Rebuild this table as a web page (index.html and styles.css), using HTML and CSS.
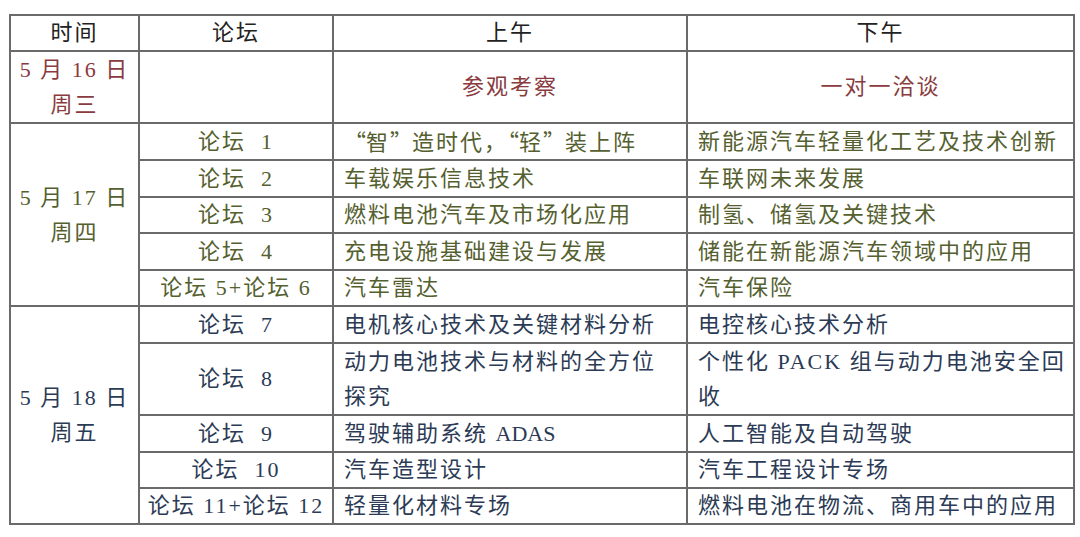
FILE: index.html
```html
<!DOCTYPE html>
<html lang="zh-CN">
<head>
<meta charset="utf-8">
<link rel="stylesheet" href="styles.css">
</head>
<body>
<table class="sched">
  <colgroup>
    <col class="c-time"><col class="c-forum"><col class="c-am"><col class="c-pm">
  </colgroup>
  <tr class="head h36">
    <td class="ctr">时间</td><td class="ctr">论坛</td><td class="ctr">上午</td><td class="ctr">下午</td>
  </tr>
  <tr class="red h72">
    <td class="ctr two">5 月 16 日<br>周三</td><td></td><td class="ctr">参观考察</td><td class="ctr">一对一洽谈</td>
  </tr>
  <tr class="olive h37">
    <td class="ctr two" rowspan="5">5 月 17 日<br>周四</td><td class="ctr">论坛&nbsp;&nbsp;1</td><td><span class="q">“</span>智<span class="q">”</span>造时代，<span class="q">“</span>轻<span class="q">”</span>装上阵</td><td class="pm">新能源汽车轻量化工艺及技术创新</td>
  </tr>
  <tr class="olive h37">
    <td class="ctr">论坛&nbsp;&nbsp;2</td><td>车载娱乐信息技术</td><td class="pm">车联网未来发展</td>
  </tr>
  <tr class="olive h36">
    <td class="ctr">论坛&nbsp;&nbsp;3</td><td>燃料电池汽车及市场化应用</td><td class="pm">制氢、储氢及关键技术</td>
  </tr>
  <tr class="olive h37">
    <td class="ctr">论坛&nbsp;&nbsp;4</td><td>充电设施基础建设与发展</td><td class="pm">储能在新能源汽车领域中的应用</td>
  </tr>
  <tr class="olive h36">
    <td class="ctr">论坛 5+论坛 6</td><td>汽车雷达</td><td class="pm">汽车保险</td>
  </tr>
  <tr class="navy h37">
    <td class="ctr two" rowspan="5">5 月 18 日<br>周五</td><td class="ctr">论坛&nbsp;&nbsp;7</td><td>电机核心技术及关键材料分析</td><td class="pm">电控核心技术分析</td>
  </tr>
  <tr class="navy h72">
    <td class="ctr">论坛&nbsp;&nbsp;8</td><td class="two">动力电池技术与材料的全方位探究</td><td class="two pm">个性化 PACK 组与动力电池安全回收</td>
  </tr>
  <tr class="navy h37">
    <td class="ctr">论坛&nbsp;&nbsp;9</td><td>驾驶辅助系统 <span class="lat">ADAS</span></td><td class="pm">人工智能及自动驾驶</td>
  </tr>
  <tr class="navy h36">
    <td class="ctr">论坛&nbsp;&nbsp;10</td><td>汽车造型设计</td><td class="pm">汽车工程设计专场</td>
  </tr>
  <tr class="navy h36">
    <td class="ctr">论坛 11+论坛 12</td><td>轻量化材料专场</td><td class="pm">燃料电池在物流、商用车中的应用</td>
  </tr>
</table>
</body>
</html>
```

FILE: styles.css
```css
html, body {
  margin: 0;
  padding: 0;
  background: #ffffff;
}
body {
  padding: 14px 0 0 9px;
}
.sched {
  border-collapse: collapse;
  table-layout: fixed;
  width: 1064px;
  font-family: "Liberation Serif", "Noto Sans CJK SC", serif;
  font-size: 22px;
  letter-spacing: 2px;
  line-height: 28px;
}
.c-time { width: 129px; }
.c-forum { width: 194px; }
.c-am { width: 354px; }
.c-pm { width: 387px; }
.sched td {
  border: 2px solid #6a6a6a;
  padding: 0 10px 0 10px;
  vertical-align: middle;
  text-align: left;
}
.sched td.pm {
  padding-right: 0;
}
.sched td.ctr {
  text-align: center;
  padding: 0 2px;
}
.sched td.two {
  line-height: 35px;
}
.q {
  font-family: "Noto Sans CJK SC", sans-serif;
  letter-spacing: 0;
}
.lat {
  letter-spacing: 0;
}
.h36 td { height: 34px; }
.h37 td { height: 35px; }
.h72 td { height: 70px; }
.head td { color: #222222; }
.red td { color: #8a3b40; }
.olive td { color: #55602f; }
.navy td { color: #2c3b55; }
```
